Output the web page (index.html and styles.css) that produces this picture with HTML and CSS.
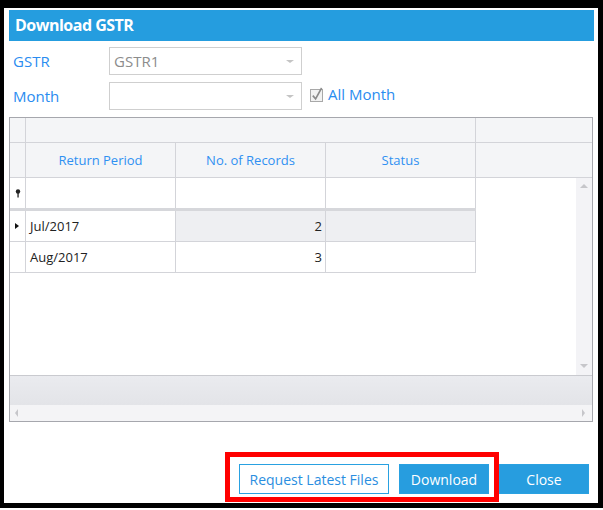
FILE: index.html
```html
<!DOCTYPE html>
<html lang="en">
<head>
  <meta charset="UTF-8">
  <meta name="viewport" content="width=device-width, initial-scale=1.0">
  <title>Download GSTR</title>
  <link rel="stylesheet" href="styles.css">
</head>
<body>
  <div class="window">
    <div class="titlebar">Download GSTR</div>

    <div class="form">
      <div class="form-row">
        <label class="field-label">GSTR</label>
        <div class="select">
          <span class="select-value">GSTR1</span>
          <span class="select-arrow"></span>
        </div>
      </div>
      <div class="form-row">
        <label class="field-label">Month</label>
        <div class="select">
          <span class="select-value"></span>
          <span class="select-arrow"></span>
        </div>
        <span class="check">
          <svg width="14" height="15" viewBox="0 0 14 15">
            <rect x="0.5" y="2.5" width="12" height="12" fill="#f2f2f2" stroke="#a8a8a8"/>
            <path d="M2.8 8.6 L5.6 11.8 L11.6 1" fill="none" stroke="#8a8a8a" stroke-width="1.6"/>
          </svg>
        </span>
        <span class="check-label">All Month</span>
      </div>
    </div>

    <div class="grid">
      <div class="band-row">
        <div class="cell ind"></div>
        <div class="cell band-span"></div>
        <div class="cell rest"></div>
      </div>
      <div class="head-row">
        <div class="cell ind"></div>
        <div class="cell col">Return Period</div>
        <div class="cell col">No. of Records</div>
        <div class="cell col">Status</div>
        <div class="cell rest"></div>
      </div>
      <div class="grid-body">
        <div class="rows">
          <div class="row filter-row">
            <div class="cell ind">
              <svg width="6" height="9" viewBox="0 0 6 9">
                <circle cx="3" cy="2.5" r="2.2" fill="#222"/>
                <rect x="2.4" y="4" width="1.3" height="4.5" fill="#222"/>
              </svg>
            </div>
            <div class="cell col"></div>
            <div class="cell col"></div>
            <div class="cell col"></div>
          </div>
          <div class="separator"></div>
          <div class="row data-row current">
            <div class="cell ind"><span class="row-arrow"></span></div>
            <div class="cell col">Jul/2017</div>
            <div class="cell col num focused">2</div>
            <div class="cell col focused"></div>
          </div>
          <div class="row data-row">
            <div class="cell ind"></div>
            <div class="cell col">Aug/2017</div>
            <div class="cell col num">3</div>
            <div class="cell col"></div>
          </div>
        </div>
        <div class="vscroll">
          <span class="tri tri-up"></span>
          <span class="tri tri-down"></span>
        </div>
      </div>
      <div class="group-footer"></div>
      <div class="hscroll">
        <span class="tri tri-left"></span>
        <span class="tri tri-right"></span>
      </div>
    </div>

    <div class="actions">
      <div class="highlight">
        <button class="btn btn-outline">Request Latest Files</button>
        <button class="btn btn-fill">Download</button>
      </div>
      <button class="btn btn-fill btn-close">Close</button>
    </div>
  </div>
</body>
</html>
```

FILE: styles.css
```css
* {
  box-sizing: border-box;
}

body {
  margin: 0;
  padding: 0;
  background: #fff;
  font-family: "Open Sans", "Noto Sans", sans-serif;
}

.window {
  width: 603px;
  height: 508px;
  border-style: solid;
  border-color: #000;
  border-width: 8px 5px 5px 4px;
  padding: 2px 4px 0 5px;
  background: #fff;
}

.titlebar {
  height: 31px;
  line-height: 31px;
  background: #259ddf;
  color: #fff;
  font-weight: bold;
  font-size: 16px;
  letter-spacing: -0.5px;
  padding-left: 6px;
}

/* form */
.form {
  padding-left: 4px;
  margin-top: 6px;
}

.form-row {
  display: flex;
  align-items: center;
  height: 28px;
  margin-bottom: 7px;
}

.field-label {
  width: 96px;
  color: #2a8cf0;
  font-size: 15px;
  margin-top: -1px;
}

.select {
  width: 193px;
  height: 28px;
  border: 1px solid #cfcfcf;
  display: flex;
  align-items: center;
  justify-content: space-between;
  padding: 0 7px 0 4px;
}

.select-value {
  color: #8c8c8c;
  font-size: 15px;
}

.select-arrow {
  width: 0;
  height: 0;
  border-left: 4px solid transparent;
  border-right: 4px solid transparent;
  border-top: 3px solid #c4c4c4;
}

.check {
  display: flex;
  margin-left: 8px;
  margin-top: -4px;
}

.check-label {
  margin-left: 4px;
  color: #2a8cf0;
  font-size: 15px;
  margin-top: -4px;
}

/* grid */
.grid {
  height: 305px;
  margin-right: 1px;
  border: 1px solid #a6a7ad;
  display: flex;
  flex-direction: column;
  font-size: 13px;
}

.cell {
  border-right: 1px solid #d3d4d9;
}

.ind {
  width: 16px;
  flex: none;
  display: flex;
  align-items: center;
  justify-content: center;
}

.col {
  width: 150px;
  flex: none;
}

.rest {
  flex: 1;
  border-right: none;
}

.band-row {
  height: 25px;
  display: flex;
  background: #f4f5f7;
  border-bottom: 1px solid #d3d4d9;
}

.band-span {
  width: 450px;
}

.head-row {
  height: 35px;
  display: flex;
  background: #f4f5f7;
  border-bottom: 1px solid #d3d4d9;
}

.head-row .col {
  display: flex;
  align-items: center;
  justify-content: center;
  color: #2f90f2;
  padding-bottom: 1px;
}

.grid-body {
  flex: 1;
  display: flex;
  background: #fff;
}

.rows {
  flex: 1;
}

.row {
  width: 466px;
  display: flex;
  border-bottom: 1px solid #d3d4d9;
}

.filter-row {
  height: 30px;
  border-bottom: none;
}

.separator {
  width: 466px;
  height: 3px;
  background: #d6d7db;
}

.data-row {
  height: 31px;
  color: #222;
}

.data-row .col {
  display: flex;
  align-items: center;
  padding: 0 4px;
}

.data-row .num {
  justify-content: flex-end;
  padding-right: 3px;
}

.focused {
  background: #eeeff2;
}

.row-arrow {
  width: 0;
  height: 0;
  border-top: 3px solid transparent;
  border-bottom: 3px solid transparent;
  border-left: 4px solid #111;
  margin-left: -1px;
}

.vscroll {
  width: 16px;
  background: #f3f3f6;
  display: flex;
  flex-direction: column;
  justify-content: space-between;
  align-items: center;
  padding: 6px 0 7px;
}

.group-footer {
  height: 30px;
  border-top: 1px solid #c9cacf;
  background: linear-gradient(#eaebef, #e3e4e8);
}

.hscroll {
  height: 16px;
  background: #f4f4f6;
  display: flex;
  justify-content: space-between;
  align-items: center;
  padding: 0 7px 0 5px;
}

.tri {
  width: 0;
  height: 0;
}

.tri-up {
  border-left: 4px solid transparent;
  border-right: 4px solid transparent;
  border-bottom: 4px solid #c6c6ca;
}

.tri-down {
  border-left: 4px solid transparent;
  border-right: 4px solid transparent;
  border-top: 4px solid #c6c6ca;
}

.tri-left {
  border-top: 4px solid transparent;
  border-bottom: 4px solid transparent;
  border-right: 3px solid #c6c6ca;
}

.tri-right {
  border-top: 4px solid transparent;
  border-bottom: 4px solid transparent;
  border-left: 3px solid #c6c6ca;
}

/* buttons */
.actions {
  display: flex;
  justify-content: flex-end;
  align-items: flex-start;
  margin-top: 30px;
  padding-right: 5px;
}

.highlight {
  display: flex;
  gap: 10px;
  border: 5px solid #ff0000;
  padding: 7px 5px 3px 9px;
}

.btn {
  height: 30px;
  font-family: "Open Sans", "Noto Sans", sans-serif;
  font-size: 14px;
  border: 1px solid #29a1e1;
  padding: 0;
  cursor: pointer;
}

.btn-outline {
  width: 150px;
  background: #fff;
  color: #2a8ee0;
}

.btn-fill {
  width: 90px;
  background: #279ddf;
  color: #fff;
}

.btn-close {
  margin-top: 12px;
}
```
